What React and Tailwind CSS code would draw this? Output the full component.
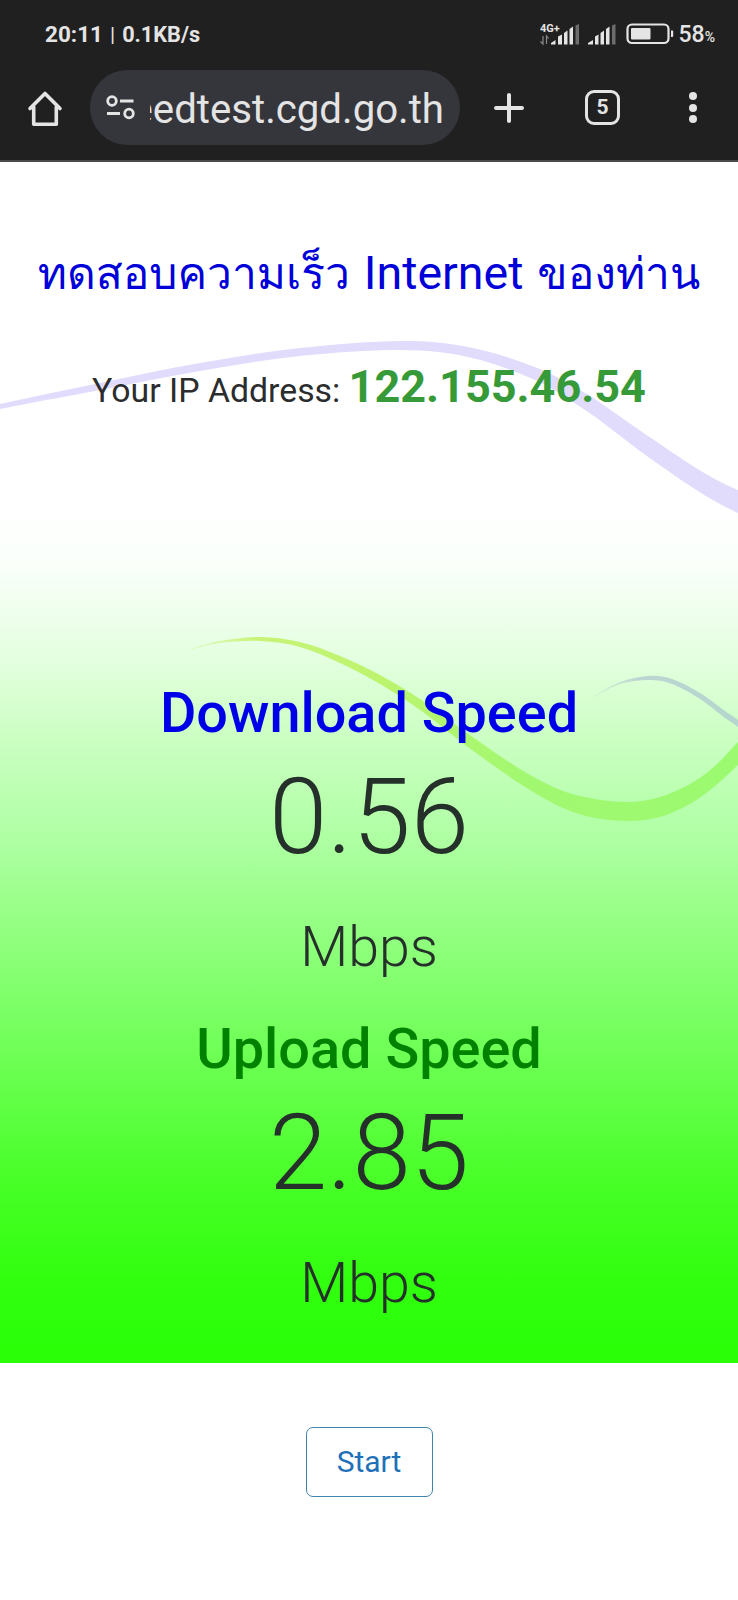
// [x, top, bottom] samples along each ribbon
const VIOLET = [[-60, 418, 422], [0, 404, 409], [100, 383, 390], [200, 363, 371], [300, 348, 356], [400, 341, 350], [468, 347, 357], [535, 367, 380], [585, 393, 410], [615, 413, 432], [651, 438, 459], [701, 471, 493], [738, 490, 513], [800, 514, 540]];
const LIME = [[190, 649, 650], [220, 641, 643], [260, 637, 641], [300, 642, 647], [340, 656, 663], [380, 675, 684], [423, 701, 712], [460, 728, 741], [497, 754, 768], [530, 775, 790], [563, 791, 808], [595, 799, 818], [630, 802, 821], [660, 797, 817], [690, 784, 804], [715, 766, 786], [738, 742, 765], [770, 710, 735]];
const SLATE = [[594, 696, 697], [620, 682, 684], [648, 676, 680], [672, 679, 684], [700, 693, 699], [725, 711, 718], [738, 720, 727], [770, 746, 754]];

function curve(pts) {
    let d = "";
    for (let i = 0; i < pts.length - 1; i++) {
        const a = pts[Math.max(i - 1, 0)];
        const b = pts[i];
        const c = pts[i + 1];
        const e = pts[Math.min(i + 2, pts.length - 1)];
        d += `C${b[0] + (c[0] - a[0]) / 6} ${b[1] + (c[1] - a[1]) / 6} ${c[0] - (e[0] - b[0]) / 6} ${c[1] - (e[1] - b[1]) / 6} ${c[0]} ${c[1]}`;
    }
    return d;
}

function ribbon(samples) {
    const top = samples.map(([x, t]) => [x, t]);
    const bottom = samples.map(([x, , b]) => [x, b]).reverse();
    return `M${top[0][0]} ${top[0][1]}${curve(top)}L${bottom[0][0]} ${bottom[0][1]}${curve(bottom)}Z`;
}

function StatusBar() {
    return (
        <div className="mb-0.5 flex h-[68px] items-center justify-between pr-[23px] pl-[45px] text-[#e4e4e4]">
            <div className="flex items-baseline font-bold">
                <span className="text-[22.5px] leading-none">20:11</span>
                <span className="mx-[7px] text-[21px] leading-none font-normal">|</span>
                <span className="text-[21.7px] leading-none">0.1KB/s</span>
            </div>
            <div className="flex items-center">
                <svg width="40" height="24" viewBox="0 0 40 24" className="mr-2">
                    <text x="0" y="9.500" fontSize="11" fontWeight="700" fill="#e4e4e4" fontFamily="Roboto, sans-serif">4G+</text>
                    <g stroke="#8a8a8a" strokeWidth="1.2" fill="none">
                        <path d="M3 14v8l-2.500-2.500M6.500 22v-8l2 2.500" />
                    </g>
                    <path d="M11 22.500v-1.500l4.500-3v4.500zM18 22.500v-8l4-2v10zM24 22.500V11l3.500-2.500v14zM29.500 22.500V7L33 4.500v18z" fill="#e4e4e4" />
                    <path d="M35.500 22.500V3.500L39 2v20.500z" fill="#6c6c6c" />
                </svg>
                <svg width="28" height="24" viewBox="0 0 28 24" className="mr-2.5">
                    <path d="M0 22.500v-1.500l5-3v4.500zM7 22.500v-8l3.500-2v10zM12.500 22.500V11L16 8.500v14zM18 22.500V7l3.500-2.500v18z" fill="#e4e4e4" />
                    <path d="M24 22.500V3.500L27.500 2v20.500z" fill="#6c6c6c" />
                </svg>
                <svg width="48" height="22" viewBox="0 0 48 22" className="mr-[5px]">
                    <rect x="1.500" y="1.500" width="41" height="18.500" rx="4.500" fill="none" stroke="#e4e4e4" strokeWidth="2.200" />
                    <rect x="5" y="5" width="19.500" height="11.500" rx="1" fill="#e4e4e4" />
                    <path d="M45 7.500h1.200q1 0 1 1v4.500q0 1-1 1H45z" fill="#e4e4e4" />
                </svg>
                <span className="text-[23px] leading-none font-medium">58</span>
                <span className="mt-1.5 text-[14px] leading-none font-medium">%</span>
            </div>
        </div>
    );
}

function Toolbar() {
    return (
        <div className="flex h-[75px] items-center text-[#e4e4e4]">
            <svg width="36" height="36" viewBox="0 0 36 36" className="ml-[27px]" fill="none" stroke="#e4e4e4" strokeWidth="3.600" strokeLinejoin="round" strokeLinecap="round">
                <path d="M3 18.500L18 3.500l15 15M6.700 17v17.200h22.600V17" />
            </svg>
            <div className="ml-[27px] flex h-full w-[370px] items-center rounded-full bg-[#35363b]">
                <svg width="30" height="26" viewBox="0 0 30 26" className="ml-4" fill="none" stroke="#e4e4e4" strokeWidth="2.800">
                    <circle cx="6" cy="6" r="4.300" />
                    <path d="M14 6h13.500M1 18.500h13" />
                    <circle cx="23" cy="18.500" r="4.300" />
                </svg>
                {/* long addresses keep their end in view */}
                <div className="mt-[5px] ml-[14px] flex w-[294px] justify-end overflow-hidden text-[40.2px] leading-[52px] whitespace-nowrap">
                    <span>speedtest.cgd.go.th</span>
                </div>
            </div>
            <svg width="34" height="34" viewBox="0 0 34 34" className="ml-8" stroke="#e4e4e4" strokeWidth="4" strokeLinecap="round">
                <path d="M17 4v26M4 17h26" />
            </svg>
            <div className="ml-[59px] flex h-[35px] w-[35px] items-center justify-center rounded-[9px] border-[3.500px] border-[#e4e4e4] text-[21px] leading-none font-bold">
                5
            </div>
            <div className="ml-[69px] flex flex-col gap-[3.500px]">
                <span className="h-2 w-2 rounded-full bg-[#e4e4e4]" />
                <span className="h-2 w-2 rounded-full bg-[#e4e4e4]" />
                <span className="h-2 w-2 rounded-full bg-[#e4e4e4]" />
            </div>
        </div>
    );
}

// Decorative ribbons behind the results
function Waves() {
    return (
        <svg className="absolute inset-0" width="738" height="1201" viewBox="0 162 738 1201">
            <defs>
                <linearGradient id="lime" gradientUnits="userSpaceOnUse" x1="190" y1="0" x2="738" y2="0">
                    <stop offset="0" stopColor="#c8f070" stopOpacity="0.2" />
                    <stop offset="0.12" stopColor="#c8f378" />
                    <stop offset="0.35" stopColor="#bcf46e" />
                    <stop offset="0.6" stopColor="#a2f870" />
                    <stop offset="1" stopColor="#9bfa70" />
                </linearGradient>
                <linearGradient id="slate" gradientUnits="userSpaceOnUse" x1="594" y1="0" x2="738" y2="0">
                    <stop offset="0" stopColor="#b8d4d0" stopOpacity="0.2" />
                    <stop offset="0.3" stopColor="#bcd6d2" />
                    <stop offset="1" stopColor="#b4d6ce" />
                </linearGradient>
            </defs>
            <path d={ribbon(VIOLET)} fill="#e2dcfc" />
            <path d={ribbon(LIME)} fill="url(#lime)" />
            <path d={ribbon(SLATE)} fill="url(#slate)" />
        </svg>
    );
}

function Result({ title, value, titleClass }) {
    return (
        <div className="flex h-[336px] flex-col items-center text-[#25302a]">
            <h3 className={"text-[55.8px] leading-[66px] font-medium " + titleClass}>{title}</h3>
            <div className="mt-[9px] text-[105px] leading-[126px] font-light">{value}</div>
            <div className="mt-[34px] text-[55.5px] leading-[66px] font-light">Mbps</div>
        </div>
    );
}

export default function App() {
    return (
        <div className="h-[1600px] w-[738px] overflow-hidden bg-white font-['Roboto','Loma','Garuda','Waree','Noto_Sans_Thai_Looped','Umpush',sans-serif] text-[#2b2c2d]">
            <header className="h-[162px] border-b-2 border-[#4a4a4a] bg-[#202020]">
                <StatusBar />
                <Toolbar />
            </header>
            <main className="relative h-[1201px] bg-[linear-gradient(to_bottom,#fff_0px,#fff_340px,#fafffa_403px,#e6ffe2_488px,#ccffc4_573px,#b4ffa9_658px,#9aff8a_744px,#80ff6b_829px,#60ff44_942px,#46ff25_1027px,#31ff0f_1120px,#29ff07_1201px)]">
                <Waves />
                <div className="relative flex flex-col items-center">
                    <h1 className="mt-[81px] h-[60px] text-[44.3px] leading-[60px] whitespace-nowrap text-[#0000d8]">
                        ทดสอบความเร็ว <span className="mx-[3px] text-[46.5px]">Internet</span> ของท่าน
                    </h1>
                    <p className="mt-[54px] text-[33.8px] leading-[60px] whitespace-nowrap">
                        Your IP Address: <b className="text-[45px] text-[#379a39]">122.155.46.54</b>
                    </p>
                    <div className="mt-[259px]">
                        <Result title="Download Speed" value="0.56" titleClass="text-[#0000e8]" />
                        <Result title="Upload Speed" value="2.85" titleClass="text-[#008200]" />
                    </div>
                </div>
            </main>
            <div className="flex justify-center pt-16">
                <button className="h-[70px] w-[127px] rounded-[7px] border border-[#3f84ad] text-[30px] leading-none text-[#1e70b8]">Start</button>
            </div>
        </div>
    );
}
